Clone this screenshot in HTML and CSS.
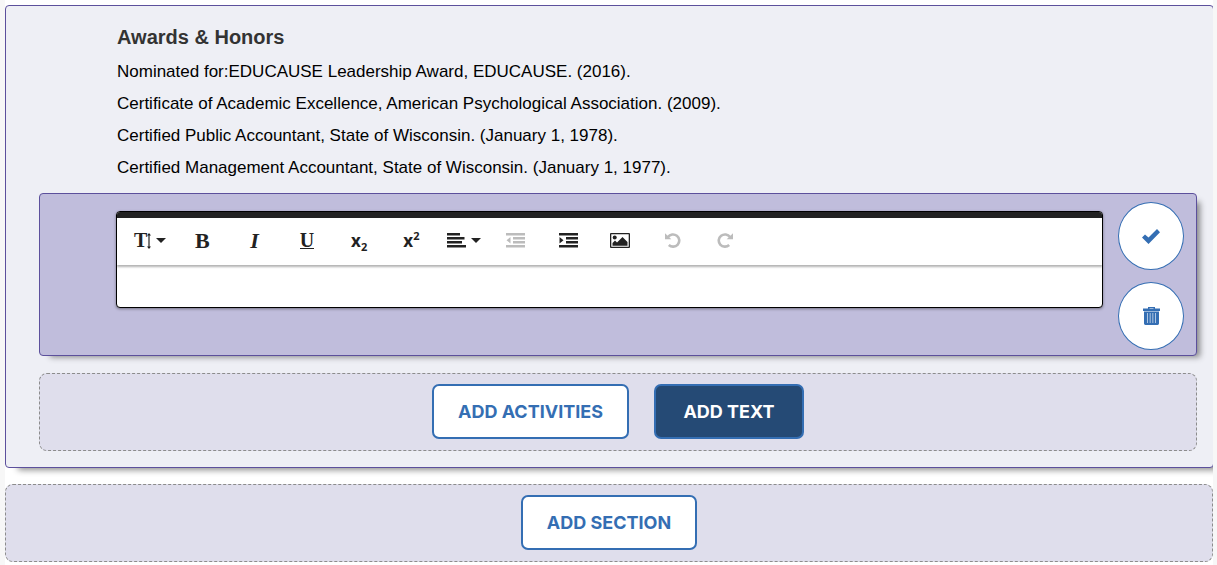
FILE: index.html
```html
<!DOCTYPE html>
<html lang="en">
<head>
    <meta charset="UTF-8">
    <meta name="viewport" content="width=device-width, initial-scale=1.0">
    <title>Awards &amp; Honors</title>
    <link rel="stylesheet" href="styles.css">
</head>
<body>
    <main class="page">
        <section class="section">
            <div class="section-text">
                <h2>Awards &amp; Honors</h2>
                <p>Nominated for:EDUCAUSE Leadership Award, EDUCAUSE. (2016).</p>
                <p>Certificate of Academic Excellence, American Psychological Association. (2009).</p>
                <p>Certified Public Accountant, State of Wisconsin. (January 1, 1978).</p>
                <p>Certified Management Accountant, State of Wisconsin. (January 1, 1977).</p>
            </div>

            <div class="text-block">
                <div class="editor">
                    <div class="toolbar">
                        <div class="tools">
                            <button type="button" class="tool tool-size" aria-label="Font size">
                                <span>T</span>
                                <svg width="4" height="16" viewBox="0 0 4 16"><path d="M2 0 4 2.500H2.600V13.500H4L2 16 0 13.500H1.400V2.500H0Z"/></svg>
                                <svg class="caret" width="10" height="5" viewBox="0 0 10 5"><path d="M0 0h10L5 5z"/></svg>
                            </button>
                            <button type="button" class="tool tool-bold" aria-label="Bold">B</button>
                            <button type="button" class="tool tool-italic" aria-label="Italic">I</button>
                            <button type="button" class="tool tool-underline" aria-label="Underline"><span>U</span></button>
                            <button type="button" class="tool tool-script" aria-label="Subscript"><span>x<sub>2</sub></span></button>
                            <button type="button" class="tool tool-script" aria-label="Superscript"><span>x<sup>2</sup></span></button>
                            <button type="button" class="tool" aria-label="Align">
                                <svg width="19" height="15" viewBox="0 0 19 15"><path d="M0 0h13v2.500H0zM0 4h17.500v2.500H0zM0 8h15v2.500H0zM0 12h19v2.500H0z"/></svg>
                                <svg class="caret" width="10" height="5" viewBox="0 0 10 5"><path d="M0 0h10L5 5z"/></svg>
                            </button>
                            <button type="button" class="tool" aria-label="Decrease indent" disabled>
                                <svg width="19" height="15" viewBox="0 0 19 15"><path d="M0 0h19v2.500H0zM7 4h12v2.500H7zM7 8h12v2.500H7zM0 12h19v2.500H0zM4.500 4v6.500L.5 7.200z"/></svg>
                            </button>
                            <button type="button" class="tool" aria-label="Increase indent">
                                <svg width="19" height="15" viewBox="0 0 19 15"><path d="M0 0h19v2.500H0zM7 4h12v2.500H7zM7 8h12v2.500H7zM0 12h19v2.500H0zM.5 4v6.500l4-3.300z"/></svg>
                            </button>
                            <button type="button" class="tool" aria-label="Insert image">
                                <svg width="20" height="15" viewBox="0 0 20 15"><path fill-rule="evenodd" d="M1 0h18a1 1 0 0 1 1 1v13a1 1 0 0 1-1 1H1a1 1 0 0 1-1-1V1a1 1 0 0 1 1-1zM1.300 1.300v12.400h17.400V1.300z"/><circle cx="4.700" cy="4.500" r="2"/><path d="M2.500 12.700V10L5 7.500l2 2L12.500 4l5 5v3.700z"/></svg>
                            </button>
                            <button type="button" class="tool" aria-label="Undo" disabled>
                                <svg width="16" height="15" viewBox="0 0 16 15"><path d="M0 .3 6.300 6.300H0z"/><path class="arc" d="M3 4A6.200 6.100 0 1 1 3.800 12"/></svg>
                            </button>
                            <button type="button" class="tool" aria-label="Redo" disabled>
                                <svg width="16" height="15" viewBox="0 0 16 15"><path d="M16 .3 9.700 6.300H16z"/><path class="arc" d="M13 4A6.200 6.100 0 1 0 12.200 12"/></svg>
                            </button>
                        </div>
                    </div>
                    <textarea class="editor-input" aria-label="Text" rows="1"></textarea>
                </div>
                <div class="block-actions">
                    <button type="button" class="round-btn" aria-label="Save">
                        <svg width="18" height="15" viewBox="0 0 18 15"><path d="M0 8.500 3 5.500 6.500 8.500 15 0 18 3.300 6.500 15z"/></svg>
                    </button>
                    <button type="button" class="round-btn" aria-label="Delete">
                        <svg width="17" height="18" viewBox="0 0 17 18"><path fill-rule="evenodd" d="M5 0h7v1.500h5v2.500H0V1.500h5zM6.500 1v.5h4V1zM1 4.600h15v12a1.400 1.400 0 0 1-1.400 1.400H2.400A1.400 1.400 0 0 1 1 16.600zM4 6v10h.6V6zM6.800 6v10h.6V6zM9.600 6v10h.6V6zM12.400 6v10h.6V6z"/></svg>
                    </button>
                </div>
            </div>

            <div class="add-row">
                <button type="button" class="btn">ADD ACTIVITIES</button>
                <button type="button" class="btn btn-active">ADD TEXT</button>
            </div>
        </section>

        <div class="add-row">
            <button type="button" class="btn">ADD SECTION</button>
        </div>
    </main>
</body>
</html>
```
FILE: styles.css
```css
* {
    box-sizing: border-box;
}
body {
    margin: 0;
    background-color: #f7f7f7;
    font-family: "Liberation Sans", Arial, sans-serif;
    color: #000;
}
.page {
    margin: 0 4px 0 5px;
    padding: 5px 0 3px;
    background-color: #fff;
    overflow: hidden;
}
.section {
    margin: 0 -1px 16px 0;
    padding: 15px 16px 16px 33px;
    background-color: #eeeff5;
    border: 1px solid #5c509c;
    border-radius: 4px;
    box-shadow: 10px 5px 6px -3px rgba(0, 0, 0, 0.45);
}
.section-text {
    padding-left: 78px;
    margin-bottom: 9px;
}
.section-text h2 {
    margin: 0 0 3px;
    font-size: 20px;
    line-height: 32px;
    color: #333;
}
.section-text p {
    margin: 0;
    font-size: 17px;
    line-height: 32px;
}

/* Editable text block */
.text-block {
    display: flex;
    align-items: flex-start;
    margin-bottom: 17px;
    padding: 8px 12px 5px 76px;
    background-color: #c0bddc;
    border: 1px solid #5c509c;
    border-radius: 4px;
    box-shadow: 7px 5px 6px -4px rgba(0, 0, 0, 0.45);
}
.editor {
    flex: 1;
    margin-top: 9px;
    background-color: #fff;
    border: 1px solid #000;
    border-radius: 4px;
    box-shadow: 0 1px 3px rgba(0, 0, 0, 0.4);
    overflow: hidden;
}
.toolbar {
    padding: 0 4px 2px;
    border-top: 6px solid #222;
    box-shadow: 0 2px 2px rgba(0, 0, 0, 0.3);
}
.tools {
    display: flex;
    max-width: 630px;
}
.tool {
    display: flex;
    align-items: center;
    justify-content: center;
    flex: 1;
    height: 45px;
    padding: 0;
    border: none;
    background: none;
    color: #222;
    font-family: "Liberation Serif", "Times New Roman", serif;
    font-size: 22px;
}
.tool svg {
    fill: currentColor;
}
.tool .arc {
    fill: none;
    stroke: currentColor;
    stroke-width: 2.6px;
}
.tool:disabled {
    color: #bcbcbc;
}
.caret {
    margin-left: 5px;
}
.tool-size {
    padding-left: 3px;
    font-size: 20px;
    font-weight: bold;
}
.tool-bold,
.tool-italic {
    font-weight: bold;
}
.tool-italic {
    font-style: italic;
}
.tool-underline span {
    height: 16px;
    font-size: 20px;
    font-weight: bold;
    line-height: 14px;
    border-bottom: 1px solid #222;
}
.tool-script {
    font-family: "Open Sans", sans-serif;
    font-size: 17px;
    font-weight: bold;
}
.tool-script sub,
.tool-script sup {
    font-size: 11px;
    line-height: 0;
}
.editor-input {
    display: block;
    width: 100%;
    height: 42px;
    padding: 8px 16px;
    border: none;
    outline: none;
    resize: none;
    background: transparent;
    font: inherit;
}
.block-actions {
    display: flex;
    flex-direction: column;
    gap: 12px;
    margin-left: 15px;
}
.round-btn {
    display: flex;
    align-items: center;
    justify-content: center;
    width: 66px;
    height: 68px;
    padding: 0;
    background-color: #fff;
    border: 1px solid #346eb3;
    border-radius: 50%;
    color: #346eb3;
    cursor: pointer;
}
.round-btn svg {
    fill: currentColor;
}

/* Dashed rows with the add buttons */
.add-row {
    display: flex;
    justify-content: center;
    gap: 25px;
    padding: 10px 10px 11px;
    background-color: #dfdeec;
    border: 1px dashed #8c8c8c;
    border-radius: 8px;
}
.btn {
    min-width: 150px;
    height: 55px;
    padding: 0 24px;
    background-color: #fff;
    border: 2px solid #346eb3;
    border-radius: 7px;
    color: #346eb3;
    font-family: Inter, sans-serif;
    font-size: 18px;
    font-weight: 700;
    cursor: pointer;
}
.btn-active {
    background-color: #254a75;
    color: #fff;
}
```
